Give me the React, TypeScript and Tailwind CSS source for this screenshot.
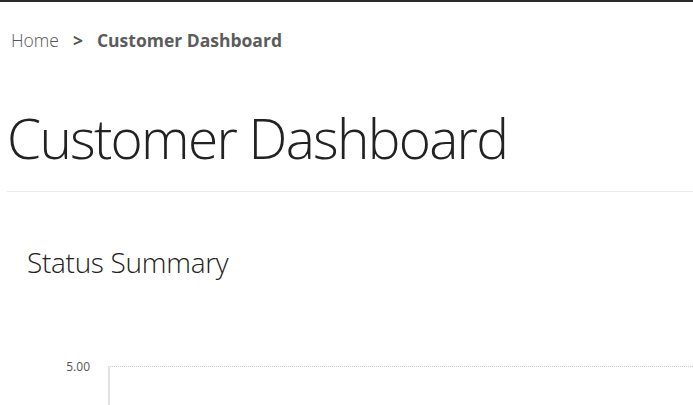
export default function App() {
  return (
    <div
      className="min-h-[405px] w-[693px] overflow-hidden border-t-2 border-[#2b2b2b] bg-white text-[#333]"
      style={{ fontFamily: '"Open Sans", "Liberation Sans", sans-serif' }}
    >
      {/* Breadcrumb */}
      <nav className="flex items-center gap-[14px] pl-[11px] pt-[27px] text-[17.5px] leading-[22px] text-[#555]">
        <span className="font-light">Home</span>
        <span className="font-bold">&gt;</span>
        <span className="font-bold text-[#5c5c5c]">Customer Dashboard</span>
      </nav>

      {/* Page title */}
      <div className="ml-[7px] border-b border-[#ebebeb] pb-[18px] pt-[52px]">
        <h1 className="text-[55px] font-light leading-[70px] tracking-[-1.75px] text-[#222]">
          Customer Dashboard
        </h1>
      </div>

      {/* Status summary */}
      <section className="pl-[27px] pt-[53px]">
        <h2 className="text-[28px] font-light leading-[34px] tracking-[-0.3px] text-[#222]">
          Status Summary
        </h2>
      </section>

      {/* Chart */}
      <div className="mt-[81px] flex">
        <div className="w-[108px] pr-[18px] text-right text-[12px] leading-[14px] text-[#555]">
          5.00
        </div>
        <div className="mt-[6px] h-[40px] flex-1 border-l-2 border-t border-l-[#e0e0e0] border-t-[#cfcfcf] [border-top-style:dotted]" />
      </div>
    </div>
  );
}
